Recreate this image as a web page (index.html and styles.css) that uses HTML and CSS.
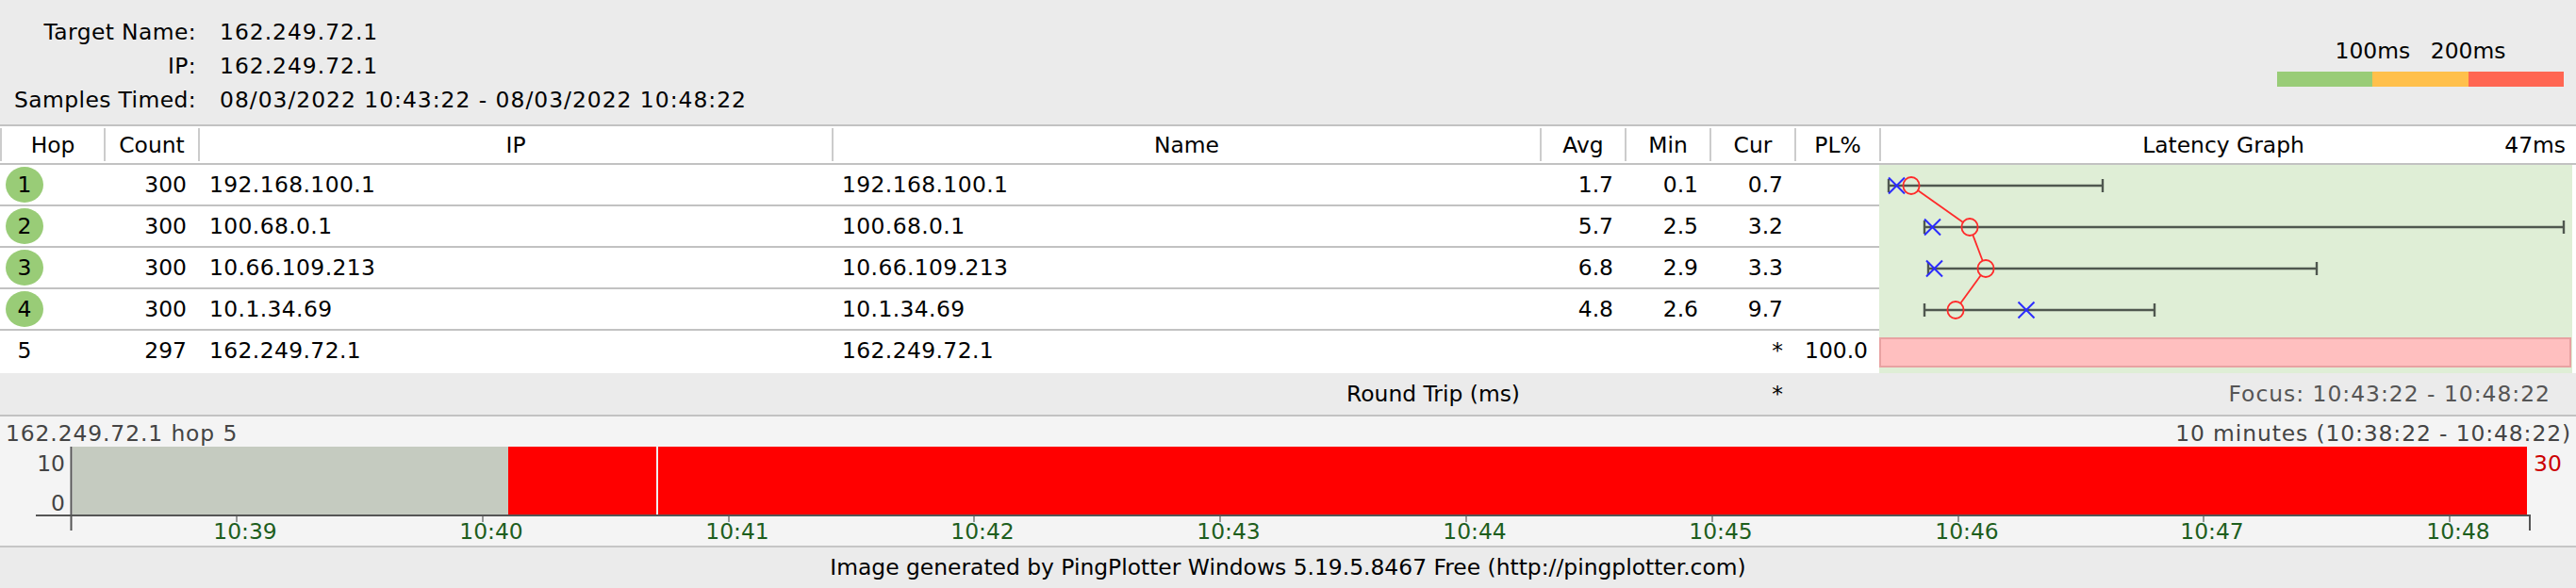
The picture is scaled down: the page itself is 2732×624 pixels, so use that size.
FILE: index.html
```html
<!DOCTYPE html>
<html>
<head>
<meta charset="utf-8">
<title>PingPlotter</title>
<link rel="stylesheet" href="styles.css">
</head>
<body>
<div class="page">
  <section class="info">
    <div class="info-grid">
      <div class="lbl">Target Name:</div><div class="val">162.249.72.1</div>
      <div class="lbl">IP:</div><div class="val">162.249.72.1</div>
      <div class="lbl">Samples Timed:</div><div class="val">08/03/2022 10:43:22 - 08/03/2022 10:48:22</div>
    </div>
    <div class="legend">
      <div class="legend-labels">
        <span class="lg-a">100ms</span>
        <span class="lg-b">200ms</span>
      </div>
      <div class="legend-bar">
        <span class="seg seg-g"></span><span class="seg seg-o"></span><span class="seg seg-r"></span>
      </div>
    </div>
  </section>

  <section class="table">
    <div class="thead">
      <div class="th">Hop</div>
      <div class="th">Count</div>
      <div class="th">IP</div>
      <div class="th">Name</div>
      <div class="th">Avg</div>
      <div class="th">Min</div>
      <div class="th">Cur</div>
      <div class="th">PL%</div>
      <div class="th th-graph"><span></span><span class="lg-title">Latency Graph</span><span class="lg-max">47ms</span></div>
    </div>
    <div class="tbody">
      <div class="rows">
        <div class="row">
          <div class="td hop"><span class="badge ok">1</span></div>
          <div class="td num">300</div>
          <div class="td txt">192.168.100.1</div>
          <div class="td txt name">192.168.100.1</div>
          <div class="td num">1.7</div>
          <div class="td num">0.1</div>
          <div class="td num">0.7</div>
          <div class="td num"></div>
        </div>
        <div class="row">
          <div class="td hop"><span class="badge ok">2</span></div>
          <div class="td num">300</div>
          <div class="td txt">100.68.0.1</div>
          <div class="td txt name">100.68.0.1</div>
          <div class="td num">5.7</div>
          <div class="td num">2.5</div>
          <div class="td num">3.2</div>
          <div class="td num"></div>
        </div>
        <div class="row">
          <div class="td hop"><span class="badge ok">3</span></div>
          <div class="td num">300</div>
          <div class="td txt">10.66.109.213</div>
          <div class="td txt name">10.66.109.213</div>
          <div class="td num">6.8</div>
          <div class="td num">2.9</div>
          <div class="td num">3.3</div>
          <div class="td num"></div>
        </div>
        <div class="row">
          <div class="td hop"><span class="badge ok">4</span></div>
          <div class="td num">300</div>
          <div class="td txt">10.1.34.69</div>
          <div class="td txt name">10.1.34.69</div>
          <div class="td num">4.8</div>
          <div class="td num">2.6</div>
          <div class="td num">9.7</div>
          <div class="td num"></div>
        </div>
        <div class="row last">
          <div class="td hop"><span class="badge">5</span></div>
          <div class="td num">297</div>
          <div class="td txt">162.249.72.1</div>
          <div class="td txt name">162.249.72.1</div>
          <div class="td num"></div>
          <div class="td num"></div>
          <div class="td num">*</div>
          <div class="td num">100.0</div>
        </div>
      </div>
      <div class="graph">
        <svg width="739" height="221" viewBox="0 0 739 221">
          <rect x="0" y="0" width="735" height="221" fill="#dfeed6"/>
          <g stroke="#4f574f" stroke-width="2.4">
            <line x1="10" y1="22" x2="237" y2="22"/>
            <line x1="10" y1="15" x2="10" y2="29"/>
            <line x1="237" y1="15" x2="237" y2="29"/>
            <line x1="48" y1="66" x2="726" y2="66"/>
            <line x1="48" y1="59" x2="48" y2="73"/>
            <line x1="726" y1="59" x2="726" y2="73"/>
            <line x1="52" y1="110" x2="464" y2="110"/>
            <line x1="52" y1="103" x2="52" y2="117"/>
            <line x1="464" y1="103" x2="464" y2="117"/>
            <line x1="48" y1="154" x2="292" y2="154"/>
            <line x1="48" y1="147" x2="48" y2="161"/>
            <line x1="292" y1="147" x2="292" y2="161"/>
          </g>
          <g stroke="#ff2a2a" stroke-width="1.8" fill="none">
            <line x1="41.3" y1="27.2" x2="88.7" y2="60.8"/>
            <line x1="99.3" y1="74.3" x2="109.7" y2="101.7"/>
            <line x1="107.7" y1="117.3" x2="86.3" y2="146.7"/>
            <ellipse cx="34" cy="22" rx="8.6" ry="9"/>
            <ellipse cx="96" cy="66" rx="8.6" ry="9"/>
            <ellipse cx="113" cy="110" rx="8.6" ry="9"/>
            <ellipse cx="81" cy="154" rx="8.6" ry="9"/>
          </g>
          <g stroke="#2b2bff" stroke-width="2">
            <line x1="10" y1="13.5" x2="27" y2="30.5"/>
            <line x1="27" y1="13.5" x2="10" y2="30.5"/>
            <line x1="48" y1="57.5" x2="65" y2="74.5"/>
            <line x1="65" y1="57.5" x2="48" y2="74.5"/>
            <line x1="50" y1="101.5" x2="67" y2="118.5"/>
            <line x1="67" y1="101.5" x2="50" y2="118.5"/>
            <line x1="147.5" y1="145.5" x2="164.5" y2="162.5"/>
            <line x1="164.5" y1="145.5" x2="147.5" y2="162.5"/>
          </g>
          <rect x="1" y="184" width="732" height="30" fill="#ffbfbf" stroke="#e8a2a2" stroke-width="2"/>
        </svg>
      </div>
    </div>
  </section>

  <section class="roundtrip">
    <div class="rt-label">Round Trip (ms)</div>
    <div class="rt-star">*</div>
    <div class="rt-focus">Focus: 10:43:22 - 10:48:22</div>
  </section>

  <section class="chart">
    <div class="chart-head">
      <span>162.249.72.1 hop 5</span>
      <span>10 minutes (10:38:22 - 10:48:22)</span>
    </div>
    <svg class="plot" width="2732" height="106" viewBox="0 0 2732 106">
      <rect x="77" y="1" width="462" height="72" fill="#c5cbc0"/>
      <rect x="539" y="1" width="2141" height="72" fill="#ff0000"/>
      <rect x="696" y="1" width="2" height="72" fill="#eeeeee"/>
      <g stroke="#999999" stroke-width="2">
        <line x1="251" y1="74" x2="251" y2="81"/>
        <line x1="512" y1="74" x2="512" y2="81"/>
        <line x1="773" y1="74" x2="773" y2="81"/>
        <line x1="1033" y1="74" x2="1033" y2="81"/>
        <line x1="1294" y1="74" x2="1294" y2="81"/>
        <line x1="1555" y1="74" x2="1555" y2="81"/>
        <line x1="1816" y1="74" x2="1816" y2="81"/>
        <line x1="2077" y1="74" x2="2077" y2="81"/>
        <line x1="2337" y1="74" x2="2337" y2="81"/>
        <line x1="2598" y1="74" x2="2598" y2="81"/>
      </g>
      <g stroke="#555555" stroke-width="2">
        <line x1="38" y1="74" x2="2684" y2="74"/>
        <line x1="75.5" y1="1" x2="75.5" y2="90"/>
        <line x1="2683" y1="74" x2="2683" y2="90"/>
      </g>
      <text class="ylab" x="69" y="27">10</text>
      <text class="ylab" x="69" y="69">0</text>
      <text class="ymax" x="2687" y="27">30</text>
      <g class="xlab">
        <text x="260" y="99">10:39</text>
        <text x="521" y="99">10:40</text>
        <text x="782" y="99">10:41</text>
        <text x="1042" y="99">10:42</text>
        <text x="1303" y="99">10:43</text>
        <text x="1564" y="99">10:44</text>
        <text x="1825" y="99">10:45</text>
        <text x="2086" y="99">10:46</text>
        <text x="2346" y="99">10:47</text>
        <text x="2607" y="99">10:48</text>
      </g>
    </svg>
  </section>

  <footer class="footer">Image generated by PingPlotter Windows 5.19.5.8467 Free (http://pingplotter.com)</footer>
</div>
</body>
</html>
```

FILE: styles.css
```css
* { box-sizing: border-box; }
html, body {
  margin: 0;
  padding: 0;
}
body {
  width: 2732px;
  height: 624px;
  overflow: hidden;
  background: #ebebeb;
  font-family: "DejaVu Sans", Verdana, sans-serif;
  font-size: 23.4px;
  color: #000;
}
.page {
  display: flex;
  flex-direction: column;
  width: 2732px;
}

/* info header */
.info {
  height: 132px;
  display: flex;
  justify-content: space-between;
  align-items: flex-start;
}
.info-grid {
  display: grid;
  grid-template-columns: 208px auto;
  column-gap: 25px;
  padding-top: 16px;
  line-height: 36px;
  white-space: nowrap;
}
.lbl {
  text-align: right;
  letter-spacing: 0.4px;
}
.val { letter-spacing: 1px; }
.legend {
  width: 304px;
  margin-right: 13px;
  margin-top: 40px;
}
.legend-labels {
  display: grid;
  grid-template-columns: repeat(6, 1fr);
  line-height: 28px;
  height: 28px;
  white-space: nowrap;
}
.lg-a { grid-column: 2 / span 2; text-align: center; }
.lg-b { grid-column: 4 / span 2; text-align: center; }
.legend-bar {
  margin-top: 8px;
  height: 16px;
  display: flex;
}
.seg { flex: 1; }
.seg-g { background: #99cc77; }
.seg-o { background: #ffc04c; }
.seg-r { background: #ff6652; }

/* table */
.table {
  background: #fff;
}
.thead {
  display: grid;
  grid-template-columns: 110px 100px 672px 751px 90px 90px 90px 90px 739px;
  border-top: 2px solid #c2c2c2;
  border-bottom: 2px solid #c2c2c2;
  height: 43px;
}
.th {
  margin: 2px 0;
  border-left: 2px solid #cccccc;
  display: flex;
  align-items: center;
  justify-content: center;
  white-space: nowrap;
}
.th-graph {
  display: grid;
  grid-template-columns: 1fr auto 1fr;
  padding-right: 11px;
}
.lg-max { justify-self: end; }
.tbody {
  display: flex;
}
.rows {
  width: 1993px;
}
.row {
  display: grid;
  grid-template-columns: 110px 100px 672px 751px 90px 90px 90px 90px;
  height: 44px;
  border-bottom: 2px solid #c2c2c2;
}
.row.last {
  height: 45px;
  border-bottom: none;
  padding-bottom: 3px;
}
.td {
  display: flex;
  align-items: center;
  white-space: nowrap;
}
.num {
  justify-content: flex-end;
  padding-right: 12px;
}
.txt {
  padding-left: 12px;
  letter-spacing: 0.4px;
}
.name { padding-left: 11px; }
.hop { padding-left: 6px; }
.badge {
  width: 40px;
  height: 38px;
  border-radius: 50%;
  display: flex;
  align-items: center;
  justify-content: center;
}
.badge.ok { background: #99cc77; }
.graph {
  width: 739px;
  height: 221px;
}
.graph svg { display: block; }

/* round trip row */
.roundtrip {
  display: grid;
  grid-template-columns: 1633px 90px 90px 90px 90px 739px;
  height: 46px;
  border-bottom: 2px solid #c2c2c2;
  align-items: center;
  white-space: nowrap;
}
.rt-label {
  grid-column: 1;
  text-align: right;
  padding-right: 21px;
}
.rt-star {
  grid-column: 4;
  text-align: right;
  padding-right: 12px;
}
.rt-focus {
  grid-column: 6;
  text-align: right;
  padding-right: 27px;
  color: #555;
  letter-spacing: 1px;
}

/* chart */
.chart {
  background: #f4f4f4;
  height: 139px;
  border-bottom: 2px solid #c6c6c6;
  display: flex;
  flex-direction: column;
}
.chart-head {
  position: relative;
  z-index: 1;
  height: 31px;
  padding: 5px 5px 0 6px;
  line-height: 27px;
  display: flex;
  justify-content: space-between;
  color: #444;
  white-space: nowrap;
  letter-spacing: 0.9px;
}
.plot {
  display: block;
  font-family: "DejaVu Sans", Verdana, sans-serif;
  font-size: 23.4px;
}
.ylab { fill: #444; text-anchor: end; }
.ymax { fill: #cc0000; }
.xlab text { fill: #1d5e1d; text-anchor: middle; }

/* footer */
.footer {
  height: 43px;
  line-height: 43px;
  text-align: center;
  white-space: nowrap;
}
```
